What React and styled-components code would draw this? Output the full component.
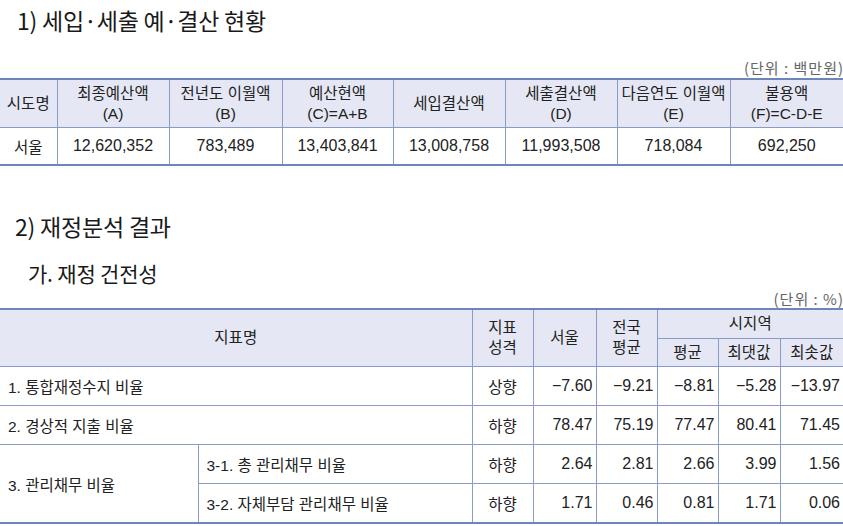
import React from 'react';
import styled, { createGlobalStyle } from 'styled-components';

const GlobalStyle = createGlobalStyle`
  html, body {
    margin: 0;
    padding: 0;
    background: #fff;
  }
  body {
    font-family: "Noto Sans CJK KR", "Noto Sans", sans-serif;
    color: #222;
    width: 843px;
    overflow: hidden;
  }
`;

const Page = styled.div`
  width: 843px;
`;

const Title = styled.h2`
  margin: 0;
  margin-top: ${(p) => p.top || 0}px;
  height: ${(p) => p.h}px;
  line-height: ${(p) => p.h}px;
  padding-left: ${(p) => p.indent}px;
  font-size: ${(p) => p.size}px;
  font-weight: 400;
  color: #1a1a1a;
  letter-spacing: -0.2px;
`;

const Unit = styled.div`
  height: ${(p) => p.h}px;
  line-height: ${(p) => p.lh || p.h}px;
  text-align: right;
  font-size: 15px;
  letter-spacing: 1px;
  color: #666;
  padding-right: 0;
  margin-right: -1px;
`;

const Table = styled.table`
  width: 843px;
  border-collapse: collapse;
  table-layout: fixed;
  font-family: "Liberation Sans", "Noto Sans CJK KR", sans-serif;
  font-size: 15.5px;
  color: #222;
  border-top: 2px solid #6f84b8;
  border-bottom: 2px solid #6f84b8;

  th, td {
    border: 1px solid #8a9bc8;
    padding: 0;
  }
  tr > *:first-child {
    border-left: none;
  }
  tr > *:last-child {
    border-right: none;
  }
`;

const Th = styled.th`
  background: #e5e8f4;
  font-weight: 400;
  height: ${(p) => p.h}px;
  line-height: 20px;
  text-align: center;
  vertical-align: middle;
`;

const Td = styled.td`
  height: ${(p) => p.h || 37}px;
  text-align: ${(p) => p.align || 'center'};
  font-size: ${(p) => (p.num ? '16px' : 'inherit')};
  padding: ${(p) =>
    p.align === 'right' ? '0 3px 0 0' : p.align === 'left' ? '0 0 0 8px' : '0'} !important;
  vertical-align: middle;
  white-space: nowrap;
`;

const budgetHead = [
  ['시도명'],
  ['최종예산액', '(A)'],
  ['전년도 이월액', '(B)'],
  ['예산현액', '(C)=A+B'],
  ['세입결산액'],
  ['세출결산액', '(D)'],
  ['다음연도 이월액', '(E)'],
  ['불용액', '(F)=C-D-E'],
];

const budgetRow = ['서울', '12,620,352', '783,489', '13,403,841', '13,008,758', '11,993,508', '718,084', '692,250'];
const budgetCols = [57, 112, 113, 111, 112, 112, 113, 113];

const ratioCols = [198, 274, 61, 63, 61, 61, 62, 63];

const simpleRows = [
  { name: '1. 통합재정수지 비율', dir: '상향', vals: ['−7.60', '−9.21', '−8.81', '−5.28', '−13.97'] },
  { name: '2. 경상적 지출 비율', dir: '하향', vals: ['78.47', '75.19', '77.47', '80.41', '71.45'] },
];

const subRows = [
  { name: '3-1. 총 관리채무 비율', dir: '하향', vals: ['2.64', '2.81', '2.66', '3.99', '1.56'] },
  { name: '3-2. 자체부담 관리채무 비율', dir: '하향', vals: ['1.71', '0.46', '0.81', '1.71', '0.06'] },
];

const Lines = ({ lines }) =>
  lines.map((l, i) => (
    <React.Fragment key={i}>
      {i > 0 && <br />}
      {l}
    </React.Fragment>
  ));

export default function App() {
  return (
    <Page>
      <GlobalStyle />
      <Title h={40} size={23} indent={17}>1) 세입·세출 예·결산 현황</Title>
      <Unit h={38} lh={56}>(단위 : 백만원)</Unit>
      <Table>
        <colgroup>
          {budgetCols.map((w, i) => (
            <col key={i} style={{ width: w }} />
          ))}
        </colgroup>
        <thead>
          <tr>
            {budgetHead.map((h, i) => (
              <Th key={i} h={47}>
                <Lines lines={h} />
              </Th>
            ))}
          </tr>
        </thead>
        <tbody>
          <tr>
            {budgetRow.map((v, i) => (
              <Td key={i} h={36} num={i > 0}>{v}</Td>
            ))}
          </tr>
        </tbody>
      </Table>

      <Title h={40} size={23} indent={15} top={40}>2) 재정분석 결과</Title>
      <Title h={34} size={21} indent={28} top={10}>가. 재정 건전성</Title>
      <Unit h={18}>(단위 : %)</Unit>
      <Table>
        <colgroup>
          {ratioCols.map((w, i) => (
            <col key={i} style={{ width: w }} />
          ))}
        </colgroup>
        <thead>
          <tr>
            <Th colSpan={2} rowSpan={2} h={28}>지표명</Th>
            <Th rowSpan={2} h={28}><Lines lines={['지표', '성격']} /></Th>
            <Th rowSpan={2} h={28}>서울</Th>
            <Th rowSpan={2} h={28}><Lines lines={['전국', '평균']} /></Th>
            <Th colSpan={3} h={28}>시지역</Th>
          </tr>
          <tr>
            <Th h={27}>평균</Th>
            <Th h={27}>최댓값</Th>
            <Th h={27}>최솟값</Th>
          </tr>
        </thead>
        <tbody>
          {simpleRows.map((r) => (
            <tr key={r.name}>
              <Td colSpan={2} align="left" h={38}>{r.name}</Td>
              <Td h={38}>{r.dir}</Td>
              {r.vals.map((v, i) => (
                <Td key={i} align="right" h={38} num>{v}</Td>
              ))}
            </tr>
          ))}
          {subRows.map((r, ri) => (
            <tr key={r.name}>
              {ri === 0 && (
                <Td rowSpan={2} align="left">3. 관리채무 비율</Td>
              )}
              <Td align="left" h={38}>{r.name}</Td>
              <Td h={38}>{r.dir}</Td>
              {r.vals.map((v, i) => (
                <Td key={i} align="right" h={38} num>{v}</Td>
              ))}
            </tr>
          ))}
        </tbody>
      </Table>
    </Page>
  );
}
